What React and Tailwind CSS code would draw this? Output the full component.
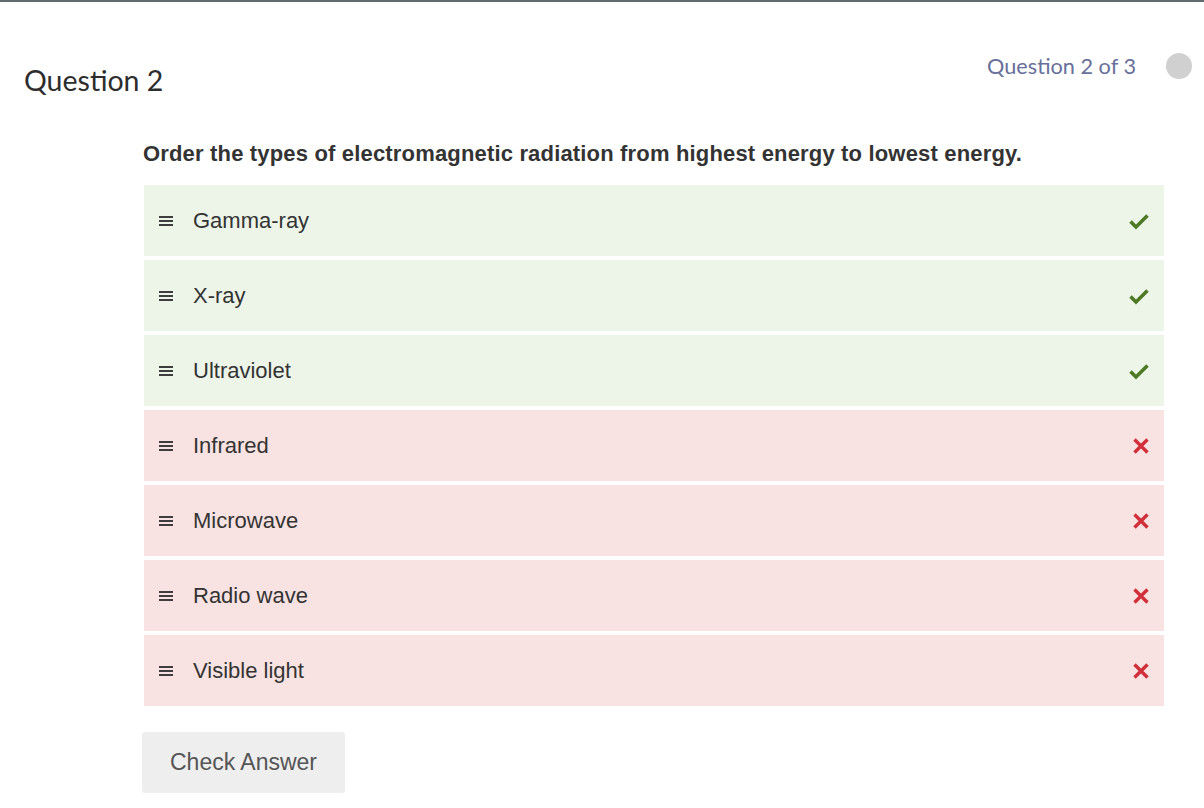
const items = [
  { label: "Gamma-ray", correct: true },
  { label: "X-ray", correct: true },
  { label: "Ultraviolet", correct: true },
  { label: "Infrared", correct: false },
  { label: "Microwave", correct: false },
  { label: "Radio wave", correct: false },
  { label: "Visible light", correct: false },
];

const Handle = () => (
  <svg width="14" height="12" viewBox="0 0 14 12" className="shrink-0">
    <rect x="0" y="1" width="14" height="2" fill="#3d3d3d" />
    <rect x="0" y="5" width="14" height="2" fill="#3d3d3d" />
    <rect x="0" y="9" width="14" height="2" fill="#3d3d3d" />
  </svg>
);

const Check = () => (
  <svg width="22" height="18" viewBox="0 0 22 18">
    <path d="M2.5 9.5 L8 15 L19.5 3.5" stroke="#4e7a25" strokeWidth="3.6" fill="none" />
  </svg>
);

const Cross = () => (
  <svg width="18" height="18" viewBox="0 0 18 18">
    <path d="M2.5 2.5 L15.5 15.5 M15.5 2.5 L2.5 15.5" stroke="#d12f3a" strokeWidth="3.4" fill="none" />
  </svg>
);

export default function App() {
  return (
    <div className="min-h-screen bg-white border-t-2 border-[#5f6b6d] font-['Liberation_Sans',Arial,sans-serif]">
      <div className="flex justify-between pl-6 pr-3">
        <h1 className="mt-[62px] text-[28.5px] leading-8 text-[#2d2d2d] font-['Lato',sans-serif]">Question 2</h1>
        <div className="mt-[48px] h-[32px] flex items-center gap-[30px]">
          <span className="text-[21.7px] text-[#676f9a] font-['Lato',sans-serif]">Question 2 of 3</span>
          <span className="w-[26px] h-[26px] rounded-full bg-[#d0d0d0]" />
        </div>
      </div>
      <div className="ml-[143px] w-[1021px]">
        <p className="mt-[43px] text-[22px] leading-[30px] font-bold text-[#333] tracking-[0.17px]">
          Order the types of electromagnetic radiation from highest energy to lowest energy.
        </p>
        <div className="mt-[16px] flex flex-col gap-1 pl-px">
          {items.map((it) => (
            <div
              key={it.label}
              className={
                "h-[71px] flex items-center pl-[15px] pr-[14px] " +
                (it.correct ? "bg-[#edf5e9]" : "bg-[#f8e3e2]")
              }
            >
              <Handle />
              <span className="ml-[20px] text-[22px] text-[#333] flex-1">{it.label}</span>
              {it.correct ? <Check /> : <Cross />}
            </div>
          ))}
        </div>
        <button className="mt-[26px] -ml-px w-[203px] h-[61px] rounded-[3px] bg-[#eeeeee] text-[23px] text-[#555]">
          Check Answer
        </button>
      </div>
    </div>
  );
}
